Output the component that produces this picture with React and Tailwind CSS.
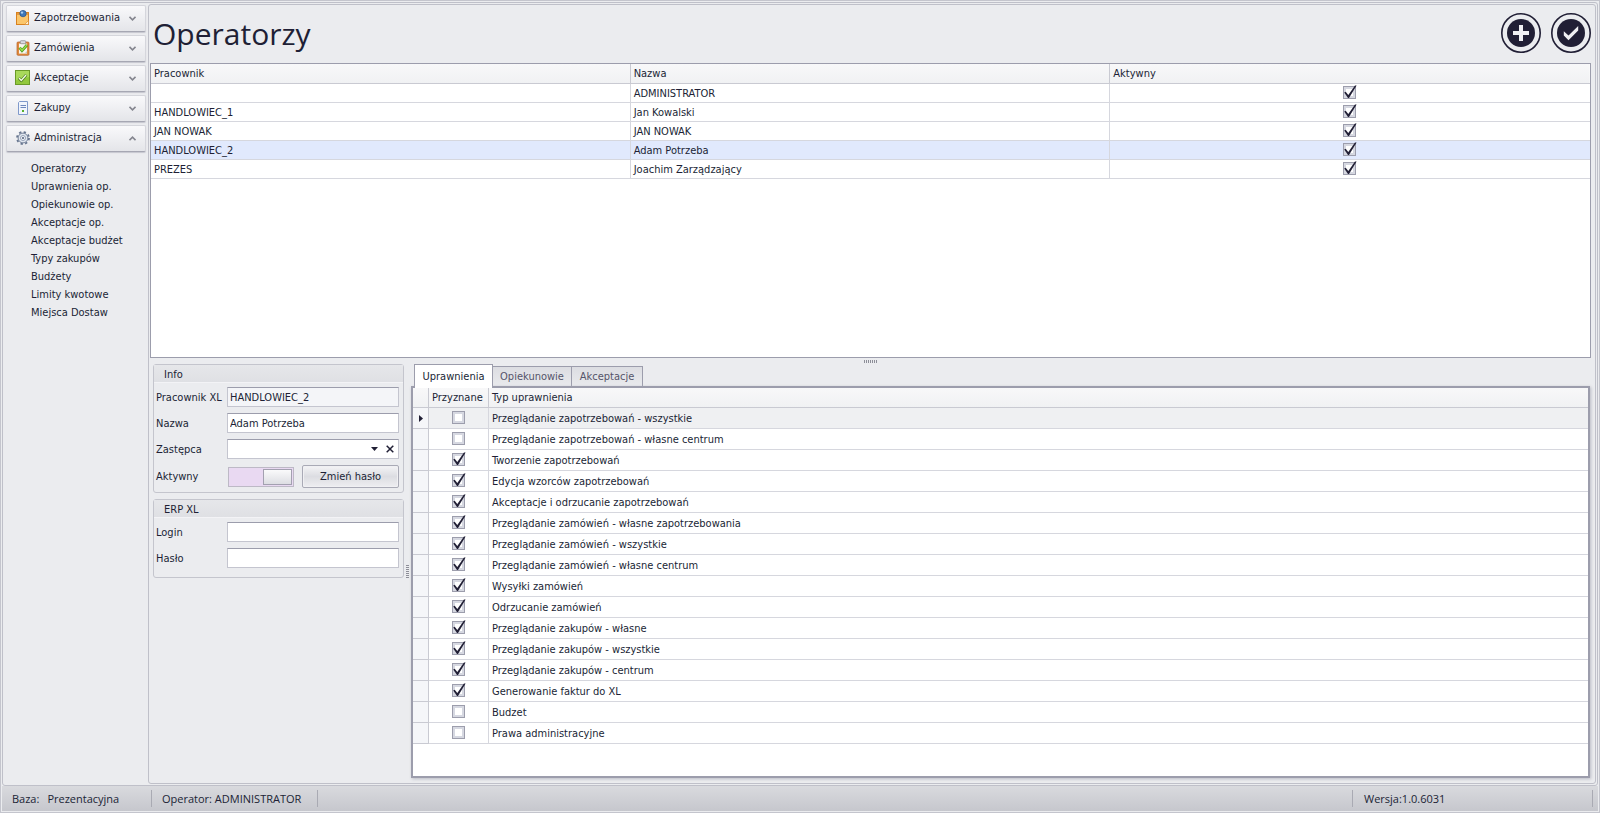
import { useState } from 'react'

const operators = [
  { employee: '', name: 'ADMINISTRATOR' },
  { employee: 'HANDLOWIEC_1', name: 'Jan Kowalski' },
  { employee: 'JAN NOWAK', name: 'JAN NOWAK' },
  { employee: 'HANDLOWIEC_2', name: 'Adam Potrzeba' },
  { employee: 'PREZES', name: 'Joachim Zarządzający' },
]

const permissions = [
  { name: 'Przeglądanie zapotrzebowań - wszystkie', granted: false },
  { name: 'Przeglądanie zapotrzebowań - własne centrum', granted: false },
  { name: 'Tworzenie zapotrzebowań', granted: true },
  { name: 'Edycja wzorców zapotrzebowań', granted: true },
  { name: 'Akceptacje i odrzucanie zapotrzebowań', granted: true },
  { name: 'Przeglądanie zamówień - własne zapotrzebowania', granted: true },
  { name: 'Przeglądanie zamówień - wszystkie', granted: true },
  { name: 'Przeglądanie zamówień - własne centrum', granted: true },
  { name: 'Wysyłki zamówień', granted: true },
  { name: 'Odrzucanie zamówień', granted: true },
  { name: 'Przeglądanie zakupów - własne', granted: true },
  { name: 'Przeglądanie zakupów - wszystkie', granted: true },
  { name: 'Przeglądanie zakupów - centrum', granted: true },
  { name: 'Generowanie faktur do XL', granted: true },
  { name: 'Budzet', granted: false },
  { name: 'Prawa administracyjne', granted: false },
]

const adminLinks = [
  'Operatorzy',
  'Uprawnienia op.',
  'Opiekunowie op.',
  'Akceptacje op.',
  'Akceptacje budżet',
  'Typy zakupów',
  'Budżety',
  'Limity kwotowe',
  'Miejsca Dostaw',
]

const NoteIcon = () => (
  <svg width="16" height="16" viewBox="0 0 16 16">
    <rect x="1.5" y="2.5" width="12" height="12" fill="#fbc66b" stroke="#d8811f" />
    <path d="M2 3h11v2H2z" fill="#e79a3c" />
    <path d="M9.5 14.5l4-4v4z" fill="#fff0cf" stroke="#d8811f" strokeWidth=".6" />
    <circle cx="8" cy="3.6" r="3.2" fill="#3f78b8" stroke="#1f4f8d" strokeWidth=".7" />
    <circle cx="7" cy="2.6" r="1.2" fill="#a9cdf0" />
  </svg>
)

const ClipboardIcon = () => (
  <svg width="16" height="16" viewBox="0 0 16 16">
    <rect x="2" y="2" width="12" height="13.3" rx="1" fill="#e08a3c" stroke="#b5622a" strokeWidth=".7" />
    <path d="M4 3.6h8v10H4z" fill="#f7f4ee" />
    <path d="M9.5 13.6l2.5-2.5v2.5z" fill="#c9c5bd" />
    <rect x="5.3" y=".7" width="5.4" height="3" rx=".8" fill="#d9dbe0" stroke="#84868f" strokeWidth=".7" />
    <path d="M4.6 7.6l2.4 3 5-5.6" fill="none" stroke="#4a9a1c" strokeWidth="2.8" />
    <path d="M4.8 7.8l2.2 2.6 4.8-5.3" fill="none" stroke="#9be04c" strokeWidth="1.4" />
  </svg>
)

const ApprovalIcon = () => (
  <svg width="16" height="16" viewBox="0 0 16 16">
    <rect x=".5" y=".5" width="14" height="14" fill="#92c83c" stroke="#6a9a28" />
    <path d="M1 1h13v6L1 10z" fill="#a9d95b" />
    <path d="M3.8 7.8l2.5 2.9 5-5.9" fill="none" stroke="#4a7a1e" strokeWidth="2.8" strokeLinejoin="round" />
    <path d="M4 8l2.3 2.4 4.8-5.4" fill="none" stroke="#f2fbe2" strokeWidth="1.4" />
  </svg>
)

const DocumentIcon = () => (
  <svg width="16" height="16" viewBox="0 0 16 16">
    <path d="M4.5 1.5h8v13h-9V2.5z" fill="#f1f5fc" stroke="#7f99cb" />
    <path d="M5.5 5.5h5.5M5.5 7.5h5.5" stroke="#6d87bd" />
    <rect x="7" y="10" width="2" height="2" fill="#55b02c" />
  </svg>
)

const GearIcon = () => (
  <svg width="16" height="16" viewBox="0 0 16 16">
    <circle cx="8" cy="8" r="6" fill="none" stroke="#66758f" strokeWidth="1.8" strokeDasharray="2.3 2.41" />
    <circle cx="8" cy="8" r="4.9" fill="#dfe5ee" stroke="#66758f" strokeWidth=".9" />
    <circle cx="8" cy="8" r="2.5" fill="#f4f6fa" stroke="#8b99b0" strokeWidth=".9" />
    <circle cx="8" cy="8" r="1" fill="#4c5b77" />
  </svg>
)

const navGroups = [
  { label: 'Zapotrzebowania', icon: NoteIcon },
  { label: 'Zamówienia', icon: ClipboardIcon },
  { label: 'Akceptacje', icon: ApprovalIcon },
  { label: 'Zakupy', icon: DocumentIcon },
  { label: 'Administracja', icon: GearIcon, open: true },
]

function NavGroup({ label, icon: Icon, open }) {
  return (
    <button
      type="button"
      aria-expanded={!!open}
      className="flex h-[27px] w-full items-center gap-[3px] rounded-[2px] border border-[#d5d6dc] border-b-[#a6a7b3] bg-linear-to-b from-[#f9f9fb] to-[#e4e5e9] pr-[9px] pb-px pl-2 text-left shadow-[0_1px_1px_#c6c7cf]"
    >
      <Icon />
      <span className="flex-1">{label}</span>
      <svg width="7" height="5" viewBox="0 0 7 5" fill="none" stroke="#85868f" strokeWidth="1.6">
        <path d={open ? 'M.5 4.2l3-3 3 3' : 'M.5.8l3 3 3-3'} />
      </svg>
    </button>
  )
}

function Check({ label, defaultChecked }) {
  const [checked, setChecked] = useState(defaultChecked)

  return (
    <span className="relative mx-auto block size-[13px]">
      <input
        type="checkbox"
        aria-label={label}
        checked={checked}
        onChange={(e) => setChecked(e.target.checked)}
        className="block size-[13px] appearance-none border border-[#9c9dac] bg-white shadow-[inset_0_0_0_2px_#d6d8e1]"
      />
      {checked && (
        <svg className="pointer-events-none absolute -top-px left-0" width="14" height="14" viewBox="0 0 14 14">
          <path d="M1.2 7.6l1.5-.9 2.6 3.3L12 .4h1.6L6 13H5z" fill="#211f35" />
        </svg>
      )}
    </span>
  )
}

function Group({ title, className, children }) {
  return (
    <fieldset className="rounded-[3px] border border-[#c4c5cd]">
      <div className="flex h-[18px] items-center border-b border-[#f3f3f6] bg-linear-to-b from-[#e6e7ea] to-[#dfe0e4] pt-0.5 pl-2.5">
        <h2>{title}</h2>
      </div>
      <div className={`flex flex-col gap-1.5 pt-1 pr-1 pl-0.5 ${className}`}>{children}</div>
    </fieldset>
  )
}

function Field({ id, label, children }) {
  return (
    <div className="flex items-center">
      <label htmlFor={id} className="w-[71px] shrink-0 pt-px whitespace-nowrap">{label}</label>
      {children}
    </div>
  )
}

const inputClass = 'h-5 w-full min-w-0 border border-[#c4c5cf] border-t-[#9c9dac] px-0.5 outline-none'

export default function App() {
  return (
    <div className="flex min-h-screen flex-col border border-[#c4c5cd] bg-[#ebecef] p-px font-['DejaVu_Sans_Condensed','DejaVu_Sans',sans-serif] text-[11px] leading-[14px] text-[#201f35]">
      <div className="flex flex-1 rounded-[3px] border border-[#bfc0c9] p-px">
        {/* Sidebar */}
        <nav className="w-36 shrink-0 pt-px pr-0.5 pl-0.5">
          <div className="flex flex-col gap-[3px]">
            {navGroups.map((group) => (
              <NavGroup key={group.label} {...group} />
            ))}
          </div>
          <ul className="pt-2 pl-[25px]">
            {adminLinks.map((link) => (
              <li key={link} className="leading-[18px]">
                <a href="#">{link}</a>
              </li>
            ))}
          </ul>
        </nav>

        {/* Content */}
        <main className="flex min-w-0 flex-1 flex-col rounded-[3px] border border-[#bfc0c9] pr-1 pb-[5px] pl-px">
          <header className="flex h-[58px] items-center justify-between pl-[3px]">
            <h1 className="font-['Open_Sans',sans-serif] text-[30px] leading-10">Operatorzy</h1>
            <div className="flex gap-2.5 pb-0.5">
              <button type="button" aria-label="Dodaj">
                <svg width="40" height="40" viewBox="0 0 40 40">
                  <circle cx="20" cy="20" r="19.2" fill="none" stroke="#211f35" strokeWidth="1.6" />
                  <circle cx="20" cy="20" r="14" fill="#211f35" />
                  <path d="M20 12v16M12 20h16" stroke="#f0f0f3" strokeWidth="4" />
                </svg>
              </button>
              <button type="button" aria-label="Zatwierdź">
                <svg width="40" height="40" viewBox="0 0 40 40">
                  <circle cx="20" cy="20" r="19.2" fill="none" stroke="#211f35" strokeWidth="1.6" />
                  <circle cx="20" cy="20" r="14" fill="#211f35" />
                  <path d="M12.8 18.2v4.2l4.7 4.8 9.7-9.8V13l-9.7 9.4z" fill="#f0f0f3" />
                </svg>
              </button>
            </div>
          </header>

          <section className="h-[295px] shrink-0 overflow-hidden border border-[#9c9dac] bg-white">
            <table className="w-full table-fixed border-separate border-spacing-0">
              <thead>
                <tr className="bg-linear-to-b from-[#f8f8f9] to-[#f0f1f3] text-left">
                  <th className="h-5 border-r border-b border-[#c9cad2] px-[3px] font-normal">Pracownik</th>
                  <th className="h-5 border-r border-b border-[#c9cad2] px-[3px] font-normal">Nazwa</th>
                  <th className="h-5 border-b border-[#c9cad2] px-[3px] font-normal">Aktywny</th>
                </tr>
              </thead>
              <tbody>
                {operators.map((op, i) => (
                  <tr key={op.name} className={i === 3 ? 'bg-[#e1e9fd]' : 'bg-white'}>
                    <td className="h-[19px] border-r border-b border-[#d6d7de] px-[3px] pt-0.5">{op.employee}</td>
                    <td className="h-[19px] border-r border-b border-[#d6d7de] px-[3px] pt-0.5">{op.name}</td>
                    <td className="h-[19px] border-b border-[#d6d7de] pr-0.5 pb-0.5">
                      <Check label={`Aktywny: ${op.name}`} defaultChecked />
                    </td>
                  </tr>
                ))}
              </tbody>
            </table>
          </section>

          <div className="flex h-1.5 items-center justify-center gap-px">
            {[0, 1, 2, 3, 4, 5, 6].map((n) => (
              <span key={n} className="h-[3px] w-px bg-[#8d8e98]" />
            ))}
          </div>

          <div className="mr-px flex flex-1">
            {/* Operator details */}
            <div className="ml-[3px] flex w-[251px] shrink-0 flex-col gap-1.5">
              <Group title="Info" className="pb-1">
                <Field id="employee" label="Pracownik XL">
                  <input id="employee" readOnly defaultValue="HANDLOWIEC_2" className={`${inputClass} bg-[#f4f5f8]`} />
                </Field>
                <Field id="name" label="Nazwa">
                  <input id="name" defaultValue="Adam Potrzeba" className={`${inputClass} bg-white`} />
                </Field>
                <Field id="deputy" label="Zastępca">
                  <div className="relative flex-1">
                    <select id="deputy" className={`${inputClass} block appearance-none bg-white`}>
                      <option></option>
                      <option>Jan Kowalski</option>
                    </select>
                    <svg className="pointer-events-none absolute top-2 right-[21px]" width="7" height="4" viewBox="0 0 7 4">
                      <path d="M0 0h7L3.5 4z" fill="#201f35" />
                    </svg>
                    <button type="button" aria-label="Wyczyść" className="absolute top-[6px] right-[5px]">
                      <svg width="8" height="8" viewBox="0 0 8 8">
                        <path d="M.7.7l6.6 6.6M7.3.7L.7 7.3" stroke="#201f35" strokeWidth="1.5" />
                      </svg>
                    </button>
                  </div>
                </Field>
                <Field id="active" label="Aktywny">
                  <div className="flex flex-1 items-center justify-between pl-px">
                    <input
                      id="active"
                      type="checkbox"
                      role="switch"
                      defaultChecked
                      className="h-5 w-[66px] appearance-none border border-[#bdb9c6] bg-[#e9d9f2] p-px before:ml-auto before:block before:h-4 before:w-[29px] before:border before:border-[#a3a0b0] before:bg-linear-to-b before:from-[#fafafb] before:to-[#dddee3]"
                    />
                    <button
                      type="button"
                      className="h-[23px] w-[97px] rounded-[2px] border border-[#a9aab6] bg-linear-to-b from-[#f4f4f6] via-[#dcdde2] to-[#eeeef1] pt-px shadow-[inset_0_0_0_1px_#f0f0f3]"
                    >
                      Zmień hasło
                    </button>
                  </div>
                </Field>
              </Group>

              <Group title="ERP XL" className="pb-[9px]">
                <Field id="login" label="Login">
                  <input id="login" className={`${inputClass} bg-white`} />
                </Field>
                <Field id="password" label="Hasło">
                  <input id="password" type="password" className={`${inputClass} bg-white`} />
                </Field>
              </Group>
            </div>

            <div className="flex w-[7px] shrink-0 flex-col items-center justify-center gap-px">
              {[0, 1, 2, 3, 4, 5, 6].map((n) => (
                <span key={n} className="h-px w-[3px] bg-[#8d8e98]" />
              ))}
            </div>

            {/* Permissions */}
            <div className="flex min-w-0 flex-1 flex-col">
              <div role="tablist" className="flex h-[22px] items-end pl-[3px]">
                <button type="button" role="tab" aria-selected="true" className="relative -mb-0.5 h-6 w-[79px] border border-b-0 border-[#9c9dac] bg-white">
                  Uprawnienia
                </button>
                <button type="button" role="tab" aria-selected="false" className="h-5 w-[79px] border border-b-0 border-l-0 border-[#9c9dac] bg-linear-to-b from-[#dcdde2] to-[#e9eaed] pt-px text-[#55546a]">
                  Opiekunowie
                </button>
                <button type="button" role="tab" aria-selected="false" className="h-5 w-[71px] border border-b-0 border-l-0 border-[#9c9dac] bg-linear-to-b from-[#dcdde2] to-[#e9eaed] pt-px text-[#55546a]">
                  Akceptacje
                </button>
              </div>
              <div className="flex-1 border-2 border-[#9c9dac] bg-white shadow-[1px_1px_3px_#b9bac4]">
                <table className="w-full table-fixed border-separate border-spacing-0">
                  <thead>
                    <tr className="bg-linear-to-b from-[#f8f8f9] to-[#f0f1f3] text-left">
                      <th aria-label="Wiersz" className="h-5 w-4 border-r border-b border-[#c9cad2]"></th>
                      <th className="h-5 w-[60px] border-r border-b border-[#c9cad2] pl-[3px] font-normal">Przyznane</th>
                      <th className="h-5 border-b border-[#c9cad2] px-[3px] font-normal">Typ uprawnienia</th>
                    </tr>
                  </thead>
                  <tbody>
                    {permissions.map((perm, i) => (
                      <tr key={perm.name} className={i === 0 ? 'bg-[#eff0f2]' : 'bg-white'}>
                        <td className="h-[21px] border-r border-b border-[#c9cad2] bg-[#f5f6f9]">
                          {i === 0 && (
                            <svg className="mx-auto block" width="4" height="7" viewBox="0 0 4 7">
                              <path d="M0 0l4 3.5L0 7z" fill="#201f35" />
                            </svg>
                          )}
                        </td>
                        <td className="h-[21px] border-r border-b border-[#d6d7de] pb-0.5">
                          <Check label={perm.name} defaultChecked={perm.granted} />
                        </td>
                        <td className="h-[21px] border-b border-[#d6d7de] px-[3px] pt-0.5">{perm.name}</td>
                      </tr>
                    ))}
                  </tbody>
                </table>
              </div>
            </div>
          </div>
        </main>
      </div>

      {/* Status bar */}
      <footer className="flex h-[25px] items-center bg-linear-to-b from-[#d9dade] to-[#c6c7cd] font-['Open_Sans',sans-serif]">
        <div className="flex h-[17px] w-[150px] items-center gap-2 border-r border-[#a9aab3] pl-2.5">
          <span>Baza:</span>
          <span>Prezentacyjna</span>
        </div>
        <div className="flex h-[17px] w-[166px] items-center border-r border-[#a9aab3] pl-2.5 whitespace-nowrap">
          Operator: ADMINISTRATOR
        </div>
        <div className="mr-[5px] ml-auto flex h-[17px] w-[241px] items-center border-x border-[#a9aab3] pl-[11px]">
          Wersja:1.0.6031
        </div>
      </footer>
    </div>
  )
}
